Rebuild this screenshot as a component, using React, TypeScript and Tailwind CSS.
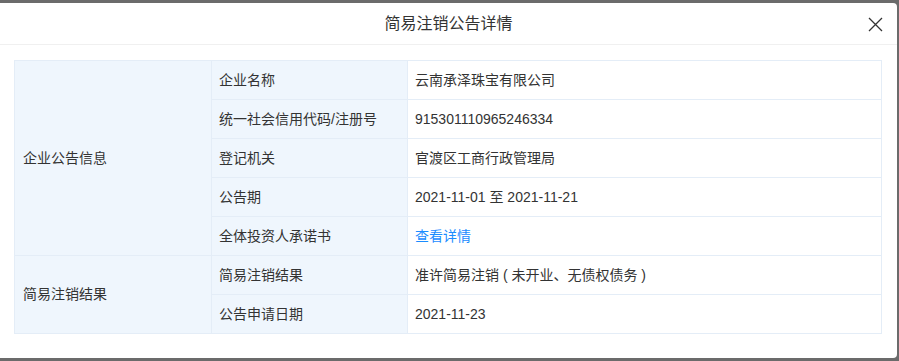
import React from "react";

const firstCell = "border border-[#e4edf7] bg-[#eff6fd] pl-[8px] text-left font-normal";
const labelCell = "border border-[#e4edf7] bg-[#eff6fd] pl-[7px] text-left font-normal";
const valueCell = "border border-[#e4edf7] bg-white pl-[7px] text-left";

export default function App() {
  const rows1: [string, React.ReactNode][] = [
    ["企业名称", "云南承泽珠宝有限公司"],
    ["统一社会信用代码/注册号", "915301110965246334"],
    ["登记机关", "官渡区工商行政管理局"],
    ["公告期", "2021-11-01 至 2021-11-21"],
    ["全体投资人承诺书", <span className="text-[#1a8cff]">查看详情</span>],
  ];
  const rows2: [string, React.ReactNode][] = [
    ["简易注销结果", "准许简易注销 ( 未开业、无债权债务 )"],
    ["公告申请日期", "2021-11-23"],
  ];
  return (
    <div
      className="h-[361px] w-[899px] overflow-hidden bg-[#6b6b6b] pt-[3px] text-[#333]"
      style={{ fontFamily: '"Liberation Sans", "Noto Sans CJK SC", sans-serif' }}
    >
      <div className="h-[355px] w-[897px] rounded-r-[4px] bg-white">
        <div className="relative flex h-[42px] items-center justify-center border-b border-[#f0f0f0]">
          <span className="text-[16px]">简易注销公告详情</span>
          <svg
            className="absolute right-[14px] top-[14px]"
            width="15"
            height="15"
            viewBox="0 0 15 15"
          >
            <path d="M1 1 L14 14 M14 1 L1 14" stroke="#333" strokeWidth="1.3" fill="none" />
          </svg>
        </div>
        <div className="pl-[14px] pr-[15px] pt-[15px]">
          <table className="w-[868px] table-fixed border-collapse text-[14px]">
            <colgroup>
              <col className="w-[197px]" />
              <col className="w-[196px]" />
              <col />
            </colgroup>
            <tbody>
              {rows1.map(([k, v], i) => (
                <tr key={k} className="h-[39px]">
                  {i === 0 && (
                    <td rowSpan={5} className={firstCell}>
                      企业公告信息
                    </td>
                  )}
                  <td className={labelCell}>{k}</td>
                  <td className={valueCell}>{v}</td>
                </tr>
              ))}
              {rows2.map(([k, v], i) => (
                <tr key={k} className="h-[39px]">
                  {i === 0 && (
                    <td rowSpan={2} className={firstCell}>
                      简易注销结果
                    </td>
                  )}
                  <td className={labelCell}>{k}</td>
                  <td className={valueCell}>{v}</td>
                </tr>
              ))}
            </tbody>
          </table>
        </div>
      </div>
    </div>
  );
}
